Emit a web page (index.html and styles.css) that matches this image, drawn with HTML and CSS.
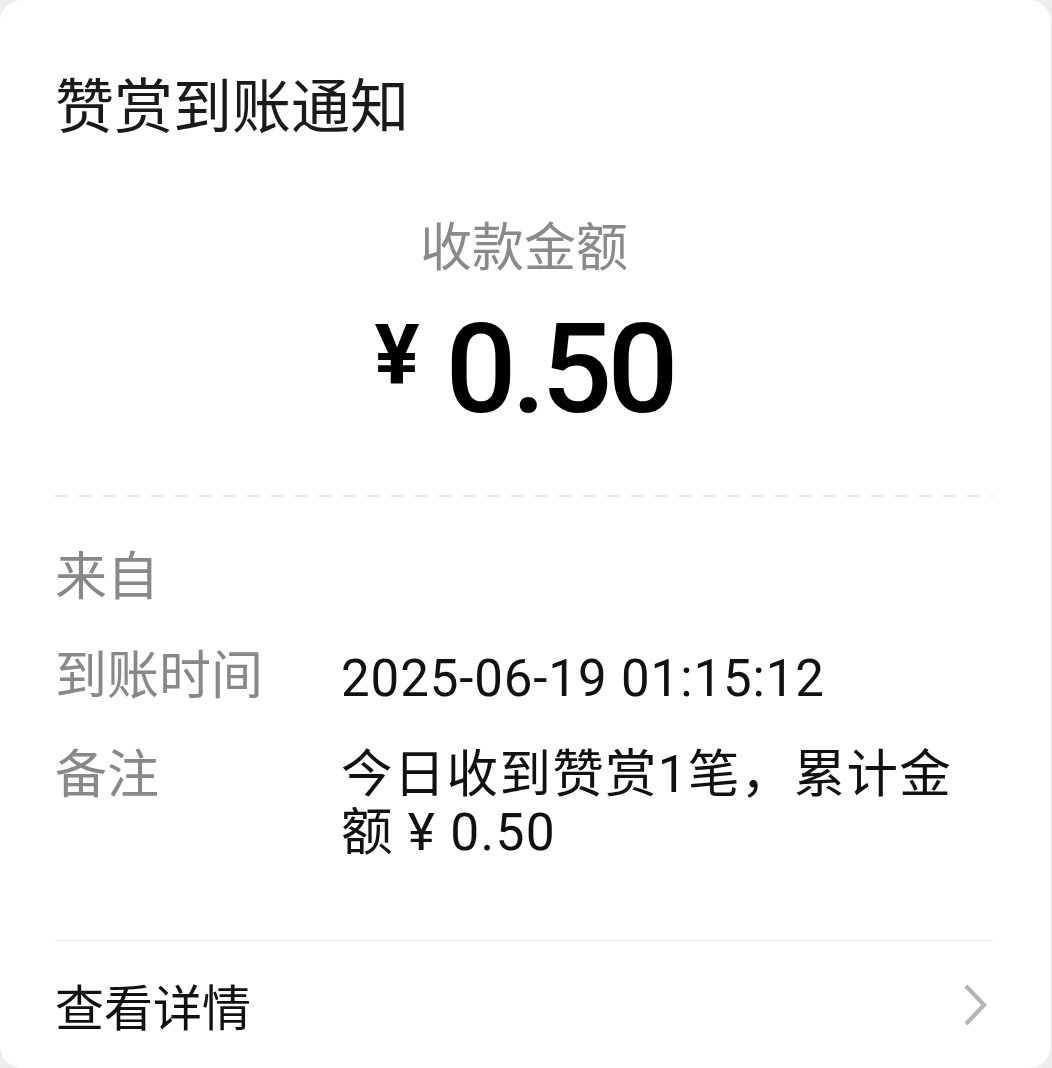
FILE: index.html
```html
<!DOCTYPE html>
<html lang="zh-CN">
<head>
    <meta charset="UTF-8">
    <meta name="viewport" content="width=device-width, initial-scale=1.0">
    <title>赞赏到账通知</title>
    <link rel="stylesheet" href="styles.css">
</head>
<body>
    <div class="card">
        <div class="title">赞赏到账通知</div>

        <div class="amount-label">收款金额</div>
        <div class="amount">
            <span class="currency">¥</span>
            <span class="amount-value">0.50</span>
        </div>

        <div class="dash"></div>

        <div class="rows">
            <div class="row">
                <div class="row-label">来自</div>
                <div class="row-value"></div>
            </div>
            <div class="row">
                <div class="row-label">到账时间</div>
                <div class="row-value"><span class="num">2025-06-19 01:15:12</span></div>
            </div>
            <div class="row">
                <div class="row-label">备注</div>
                <div class="row-value note">今日收到赞赏1笔，累计金额 ¥ 0.50</div>
            </div>
        </div>

        <div class="divider"></div>

        <div class="footer">
            <span class="footer-text">查看详情</span>
            <svg class="chevron" width="26" height="44" viewBox="0 0 26 44">
                <polyline points="4,3 22,22 4,41" fill="none" stroke="#b4b4b4" stroke-width="4.2"/>
            </svg>
        </div>
    </div>
</body>
</html>
```

FILE: styles.css
```css
body, html {
    margin: 0;
    height: 100%;
    background-color: #ededed;
    font-family: "Noto Sans CJK SC", sans-serif;
}
.card {
    box-sizing: border-box;
    width: 1052px;
    height: 1068px;
    padding: 0 58px 0 55px;
    background-color: #ffffff;
    border-right: 1px solid #e6e6e6;
    border-radius: 22px;
    display: flex;
    flex-direction: column;
    overflow: hidden;
}
.title {
    margin-top: 74px;
    font-size: 59px;
    line-height: 58px;
    color: #1a1a1a;
}
.amount-label {
    margin-top: 86px;
    text-align: center;
    font-size: 52px;
    line-height: 52px;
    color: #8a8a8a;
}
.amount {
    margin-top: 37px;
    display: flex;
    justify-content: center;
    align-items: flex-start;
    font-family: Roboto, sans-serif;
    color: #000;
}
.currency {
    margin-top: 7px;
    margin-right: 26px;
    font-size: 84px;
    line-height: 84px;
    font-weight: 700;
}
.amount-value {
    font-size: 125px;
    line-height: 125px;
    font-weight: 500;
    letter-spacing: -5px;
}
.dash {
    margin-top: 63px;
    height: 2px;
    background-image: repeating-linear-gradient(to right, #e6e6e6 0, #e6e6e6 12px, transparent 12px, transparent 24px);
}
.rows {
    margin-top: 47px;
    display: flex;
    flex-direction: column;
    gap: 41px;
}
.row {
    display: flex;
    align-items: flex-start;
}
.row-label {
    width: 286px;
    flex-shrink: 0;
    font-size: 52px;
    line-height: 58px;
    color: #888888;
}
.row-value {
    width: 620px;
    min-height: 58px;
    padding-top: 2px;
    margin-bottom: -2px;
    font-size: 51.5px;
    line-height: 58px;
    letter-spacing: 1.3px;
    color: #111111;
}
.row-value.note {
    padding-top: 4px;
    margin-bottom: -4px;
    font-family: Roboto, "Noto Sans CJK SC", sans-serif;
}
.num {
    font-family: Roboto, sans-serif;
    font-size: 51px;
    line-height: 48px;
    letter-spacing: 0.9px;
}
.divider {
    margin-top: 82px;
    height: 1px;
    background-color: #e5e5e5;
}
.footer {
    margin-top: 38px;
    display: flex;
    justify-content: space-between;
    align-items: center;
}
.footer-text {
    font-size: 49px;
    line-height: 52px;
    color: #111111;
}
.chevron {
    margin-right: 5px;
}
```
